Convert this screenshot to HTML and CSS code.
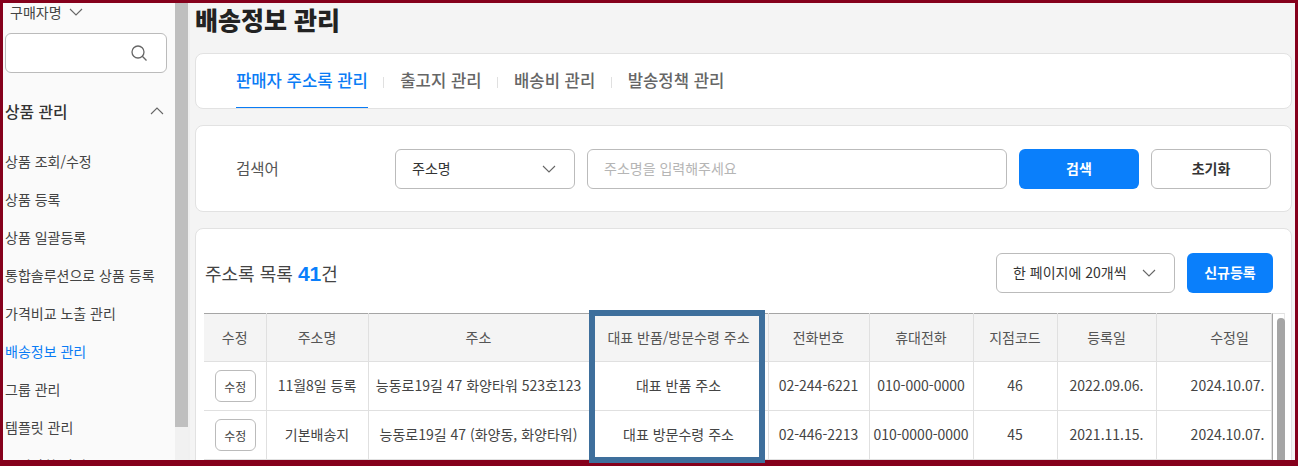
FILE: index.html
```html
<!DOCTYPE html>
<html lang="ko">
<head>
<meta charset="utf-8">
<title>배송정보 관리</title>
<link rel="stylesheet" href="styles.css">
</head>
<body>
<div class="frame">
  <aside class="sidebar">
    <div class="side-content">
      <div class="side-filter">구매자명
        <svg class="chev-sm" width="14" height="8" viewBox="0 0 14 8"><path d="M1 1l6 6 6-6" fill="none" stroke="#666" stroke-width="1.1"/></svg>
      </div>
      <div class="side-search">
        <svg width="18" height="18" viewBox="0 0 18 18"><circle cx="8" cy="8" r="6" fill="none" stroke="#666" stroke-width="1.3"/><path d="M12.3 12.3l4.2 4.2" stroke="#666" stroke-width="1.3"/></svg>
      </div>
      <div class="side-group">상품 관리
        <svg width="14" height="8" viewBox="0 0 14 8"><path d="M1 7l6-6 6 6" fill="none" stroke="#666" stroke-width="1.1"/></svg>
      </div>
      <ul class="side-menu">
        <li>상품 조회/수정</li>
        <li>상품 등록</li>
        <li>상품 일괄등록</li>
        <li>통합솔루션으로 상품 등록</li>
        <li>가격비교 노출 관리</li>
        <li class="active">배송정보 관리</li>
        <li>그룹 관리</li>
        <li>템플릿 관리</li>
        <li>공지사항 관리</li>
      </ul>
    </div>
    <div class="side-scroll"><div class="side-thumb"></div></div>
  </aside>
  <main class="main">
    <h1 class="title">배송정보 관리</h1>
    <section class="card tabs">
      <a class="tab on">판매자 주소록 관리</a>
      <a class="tab">출고지 관리</a>
      <a class="tab">배송비 관리</a>
      <a class="tab">발송정책 관리</a>
    </section>
    <section class="card search">
      <span class="search-label">검색어</span>
      <div class="select sel-name"><span class="lift">주소명</span>
        <svg width="14" height="8" viewBox="0 0 14 8"><path d="M1 1l6 6 6-6" fill="none" stroke="#666" stroke-width="1.1"/></svg>
      </div>
      <div class="input"><span class="lift">주소명을 입력해주세요</span></div>
      <button class="btn primary btn-search">검색</button>
      <button class="btn ghost">초기화</button>
    </section>
    <section class="card list">
      <div class="list-head">
        <div class="list-title">주소록 목록 <b>41</b>건</div>
        <div class="select sel-page"><span class="lift">한 페이지에 20개씩</span>
          <svg width="14" height="8" viewBox="0 0 14 8"><path d="M1 1l6 6 6-6" fill="none" stroke="#666" stroke-width="1.1"/></svg>
        </div>
        <button class="btn primary btn-new">신규등록</button>
      </div>
      <div class="table-wrap">
        <table class="grid">
          <colgroup>
            <col class="c1"><col class="c2"><col class="c3"><col class="c4"><col class="c5"><col class="c6"><col class="c7"><col class="c8"><col class="c9">
          </colgroup>
          <thead>
            <tr><th>수정</th><th>주소명</th><th>주소</th><th>대표 반품/방문수령 주소</th><th>전화번호</th><th>휴대전화</th><th>지점코드</th><th>등록일</th><th class="pad-r">수정일</th></tr>
          </thead>
          <tbody>
            <tr><td class="edit-cell"><span class="edit">수정</span></td><td>11월8일 등록</td><td>능동로19길 47 화양타워 523호123</td><td>대표 반품 주소</td><td>02-244-6221</td><td>010-000-0000</td><td>46</td><td>2022.09.06.</td><td class="right">2024.10.07.</td></tr>
            <tr><td class="edit-cell"><span class="edit">수정</span></td><td>기본배송지</td><td>능동로19길 47 (화양동, 화양타워)</td><td>대표 방문수령 주소</td><td>02-446-2213</td><td>010-0000-0000</td><td>45</td><td>2021.11.15.</td><td class="right">2024.10.07.</td></tr>
          </tbody>
        </table>
        <div class="table-scroll"><div class="table-thumb"></div></div>
      </div>
    </section>
  </main>
  <div class="highlight"></div>
</div>
</body>
</html>
```
FILE: styles.css
```css
* { box-sizing: border-box; }
html, body { margin: 0; padding: 0; }
body { width: 1298px; height: 466px; overflow: hidden; font-family: "Noto Sans CJK KR", "Noto Sans", sans-serif; color: #333; }
.frame { position: relative; width: 1298px; height: 466px; border: solid #85001c; border-width: 3px 3px 6px 3px; display: flex; background: #f4f4f4; }
.sidebar { width: 187px; flex: none; display: flex; overflow: hidden; background: #fafafa; border-right: 2px solid #f0f0f0; }
.side-content { width: 172px; flex: none; }
.side-scroll { width: 13px; flex: none; background: #f1f1f1; }
.side-thumb { height: 424px; background: #bfbfbf; }
.side-filter { height: 18px; padding: 0 0 0 7px; font-size: 14px; display: flex; align-items: center; gap: 7px; color: #444; }
.side-search { margin: 12px 8px 0 2px; height: 40px; border: 1px solid #bbb; border-radius: 6px; background: #fff; display: flex; align-items: center; justify-content: flex-end; padding-right: 18px; }
.side-group { margin: 26px 11px 0 2px; height: 24px; display: flex; align-items: center; justify-content: space-between; font-size: 15.8px; font-weight: 500; color: #333; }
.side-menu { list-style: none; margin: 19px 0 0; padding: 0 0 0 2px; }
.side-menu li { height: 38px; line-height: 38px; font-size: 14px; color: #444; white-space: nowrap; }
.side-menu li.active { color: #0a7cf5; }
.main { flex: 1; min-width: 0; overflow: hidden; padding: 0 3px 0 5px; }
.title { margin: 0; height: 50px; font-size: 25px; line-height: 33px; font-weight: 900; color: #222; }
.card { background: #fff; border: 1px solid #e2e2e2; border-radius: 8px; }
.tabs { height: 56px; display: flex; align-items: stretch; padding-left: 40px; }
.tab { display: flex; align-items: center; padding-bottom: 2px; font-size: 16.65px; font-weight: 500; color: #666; position: relative; margin-right: 32.5px; }
.tab.on { color: #0a7cf5; border-bottom: 1px solid #0a7cf5; }
.tab + .tab::before { content: ""; position: absolute; left: -17px; top: 23px; height: 11px; width: 1px; background: #e0e0e0; }
.search { height: 87px; margin-top: 16px; display: flex; align-items: center; padding-left: 40px; }
.search-label { width: 159px; padding-bottom: 2px; font-size: 15.5px; color: #555; }
.select { height: 40px; border: 1px solid #bbb; border-radius: 6px; background: #fff; display: flex; align-items: center; justify-content: space-between; font-size: 14px; color: #333; padding: 0 18px 0 16px; }
.lift { padding-bottom: 2px; }
.sel-name { width: 180px; }
.input { width: 420px; height: 40px; margin-left: 12px; border: 1px solid #bbb; border-radius: 6px; display: flex; align-items: center; padding-left: 16px; font-size: 14px; color: #b5b5b5; }
.btn { height: 40px; border-radius: 6px; font: 700 14px "Noto Sans CJK KR", sans-serif; padding: 0 0 2px; }
.primary { background: #0a7ffb; color: #fff; border: 0; }
.ghost { background: #fff; color: #333; border: 1px solid #bbb; width: 120px; margin-left: 12px; }
.btn-search { width: 120px; margin-left: 12px; }
.list { height: 300px; margin-top: 16px; padding: 0 9px 0 8px; }
.list-head { height: 84px; display: flex; align-items: center; padding: 3px 9px 0 1px; }
.list-title { flex: 1; font-size: 18px; color: #444; }
.list-title b { color: #0a7ffb; font-family: "Liberation Sans", sans-serif; font-size: 21px; }
.sel-page { width: 179px; }
.btn-new { width: 86px; margin-left: 12px; }
.table-wrap { display: flex; }
.grid { width: 1067px; flex: none; align-self: flex-start; table-layout: fixed; border-collapse: collapse; border-top: 1px solid #a5a5a5; font-size: 14px; }
.c1 { width: 62px; } .c2 { width: 102px; } .c3 { width: 221px; } .c4 { width: 179px; } .c5 { width: 101px; } .c6 { width: 104px; } .c7 { width: 84px; } .c8 { width: 99px; } .c9 { width: 115px; }
.grid th { height: 48px; background: #f4f4f4; font-weight: 400; color: #555; border: 1px solid #e0e0e0; border-top: 0; padding: 0 0 2px; }
.grid td { height: 49px; text-align: center; color: #444; border: 1px solid #e0e0e0; padding: 0 0 2px; white-space: nowrap; }
.grid th:first-child, .grid td:first-child { border-left: 0; }
.grid td.edit-cell { padding: 0 0 0 1px; }
.grid .pad-r { padding-left: 32px; }
.grid .right { text-align: right; padding-right: 6px; }
.edit { display: inline-flex; width: 41px; height: 32px; border: 1px solid #bbb; border-radius: 6px; align-items: center; justify-content: center; font-size: 12px; vertical-align: middle; }
.table-scroll { width: 13px; flex: none; border-left: 1px solid #a5a5a5; border-top: 1px solid #e0e0e0; border-right: 1px solid #e8e8e8; background: #fff; padding: 4px 1px 0 4px; }
.table-thumb { width: 8px; height: 200px; border-radius: 4px; background: #a5a5a5; }
.highlight { position: absolute; left: 586px; top: 307px; width: 176px; height: 153px; border: 6px solid #3e6f9c; }
```
